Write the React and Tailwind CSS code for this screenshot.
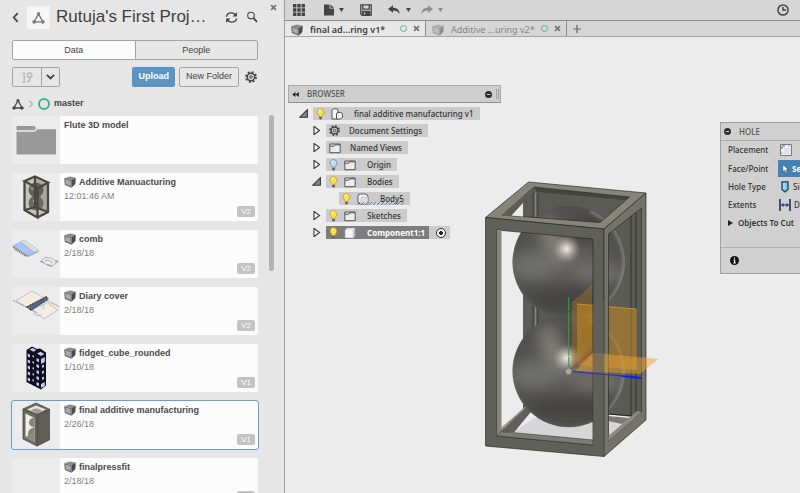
import React, { useState } from 'react';
import clsx from 'clsx';

const files = [
  { name: 'Flute 3D model', type: 'folder' },
  { name: 'Additive Manuacturing', date: '12:01:46 AM', version: 'V2', thumb: 'frame' },
  { name: 'comb', date: '2/18/18', version: 'V2', thumb: 'comb' },
  { name: 'Diary cover', date: '2/18/18', version: 'V2', thumb: 'diary' },
  { name: 'fidget_cube_rounded', date: '1/10/18', version: 'V1', thumb: 'fidget' },
  { name: 'final additive manufacturing', date: '2/26/18', version: 'V1', thumb: 'solid' },
  { name: 'finalpressfit', date: '2/18/18', version: 'V1', thumb: 'none' }
];

const documents = [
  { id: 1, name: 'final ad...ring v1*' },
  { id: 2, name: 'Additive ...uring v2*' }
];

/* ---------- Icons ---------- */

const NodesIcon = ({ className }) => (
  <svg viewBox="0 0 24 24" className={className} fill="none" stroke="currentColor" strokeWidth="2.6">
    <path d="M11 7 5 18M13 7l6 11M6 20h12" />
    <circle cx="12" cy="5" r="3" fill="currentColor" stroke="none" />
    <circle cx="4" cy="20" r="3.4" fill="currentColor" stroke="none" />
    <circle cx="20" cy="20" r="3.4" fill="currentColor" stroke="none" />
  </svg>
);

const GearIcon = ({ className }) => (
  <svg viewBox="0 0 24 24" className={className} fill="none" stroke="currentColor">
    <circle cx="12" cy="12" r="10" strokeWidth="3.6" strokeDasharray="3.93 3.93" />
    <circle cx="12" cy="12" r="7.4" strokeWidth="3" />
    <circle cx="12" cy="12" r="2.6" strokeWidth="2" />
  </svg>
);

const CubeIcon = ({ className }) => (
  <svg viewBox="0 0 12 12" className={className}>
    <path d="M.2 2.2 6 .5l5.800 1.200L7.500 4z" fill="#8a8a8a" />
    <path d="M.2 2.200 7.500 4v7.800L.8 8.900z" fill="#6b6b6b" />
    <path d="M1.500 3.600 6.600 4.900v5.200L1.700 8z" fill="#acacac" />
    <path d="M7.500 4l4.300-2.300-.4 6.300-3.900 3.800z" fill="#4c4c4c" />
  </svg>
);

const CloseIcon = ({ className }) => (
  <svg viewBox="0 0 10 10" className={className} stroke="currentColor" strokeWidth="2.6">
    <path d="M1.5 1.5l7 7M8.5 1.5l-7 7" />
  </svg>
);

const BulbIcon = ({ off }) => (
  <svg viewBox="0 0 10 14" className="h-3 w-[9px] shrink-0">
    <path
      d="M5 .8a4 4 0 0 0-2.3 7.3c.6.5.6 1 .6 1.7h3.4c0-.7 0-1.2.6-1.7A4 4 0 0 0 5 .8z"
      fill={off ? '#c3dcf5' : '#ffe24a'}
      stroke={off ? '#6d86ad' : '#c99c1c'}
      strokeWidth="1"
    />
    <path d="M3 3.6A2 2 0 0 1 5 2.3" stroke="#fff" strokeWidth="1.2" fill="none" />
    <path d="M3.3 10.5h3.4v2L5 13.6l-1.7-1.1z" fill="#666" />
  </svg>
);

const FolderIcon = () => (
  <svg viewBox="0 0 12 12" className="size-3 shrink-0" fill="#ececec" stroke="#555" strokeWidth="1">
    <path d="M.8 2h10.4v8.7H.8z" />
    <path d="M.8 4.2h4l1-1.4h5.2" fill="none" />
  </svg>
);

const BodyIcon = () => (
  <svg viewBox="0 0 12 12" className="size-3 shrink-0">
    <path d="M1 3.4Q1 1 3.4 1h4Q11 1 11 4v7H3.4Q1 11 1 8.6z" fill="#fafafa" stroke="#555" />
    <path d="M4 11V5.5Q4 4 5.5 4H11v7z" fill="#dedede" stroke="#aaa" strokeWidth=".6" />
  </svg>
);

const ComponentIcon = () => (
  <svg viewBox="0 0 12 12" className="size-3 shrink-0">
    <path d="M1 3l2-2h8v8l-2 2H1z" fill="#f6f6f6" stroke="#999" strokeWidth=".6" />
    <path d="M9 3.2 11 1v8l-2 2z" fill="#bdbdbd" />
    <path d="M1.6 3.2H9v7.3" fill="none" stroke="#d5d5d5" strokeWidth=".6" />
  </svg>
);

const AssemblyIcon = () => (
  <svg viewBox="0 0 12 12" className="size-3 shrink-0" fill="#f4f4f4" stroke="#555" strokeWidth="1">
    <path d="M1 2 2.5.8H6L7 2v9H1z" />
    <path d="M5.5 6Q5.5 4.5 7 4.5h2.5q2 0 2 2V9l-2 2h-4z" />
  </svg>
);

const Expander = ({ open }) =>
  open ? (
    <svg viewBox="0 0 10 10" className="size-[9px] shrink-0">
      <path d="M9.3.8v8.4H.8z" fill="#8a8a8a" stroke="#333" strokeWidth="1.2" />
    </svg>
  ) : (
    <svg viewBox="0 0 10 10" className="size-[9px] shrink-0">
      <path d="M2.200.400 8.400 5 2.200 9.600z" fill="#f4f4f4" stroke="#333" strokeWidth="1.200" />
    </svg>
  );

/* ---------- Thumbnails ---------- */

const fidgetRows = [0, 1, 2, 3, 4];

const Thumb = ({ kind }) => {
  if (kind === 'folder') {
    return (
      <svg viewBox="0 0 48 48" className="size-12">
        <path d="M4.500 10h17.300q1.800 0 2 2.200-.3 1.600-2 2H4.500z" fill="#999" />
        <path d="M4.500 15.800H22q2 0 3-2.500h19V38.500H4.500z" fill="#999" />
      </svg>
    );
  }
  if (kind === 'frame') {
    return (
      <svg viewBox="0 0 48 48" className="size-12">
        <path d="M12 8 23 3l13 6v31l-11 5-13-8z" fill="#c4c3bf" />
        <path d="M24 6l11 5v28l-9-4z" fill="#a9a7a2" />
        <circle cx="24" cy="17" r="7.500" fill="#625f59" />
        <circle cx="24" cy="30" r="7.500" fill="#6c6963" />
        <circle cx="21" cy="15" r="2.500" fill="#8b8882" />
        <circle cx="23" cy="28" r="1.800" fill="#e7e3dc" />
        <path d="M12.500 8 23 3.500 36 9.500 25.500 15.500zM12.500 8v29l13 7.500V15.500M25.500 44.500 36 39V9.500M23 4v30l-10 3M23 34l13 5" fill="none" stroke="#4a4640" strokeWidth="2.300" />
      </svg>
    );
  }
  if (kind === 'comb') {
    return (
      <svg viewBox="0 0 48 48" className="size-12">
        <path d="M0 16.500 10 12l17 10-11 5z" fill="#a4b0ca" />
        <path d="M1 15 7 12l17 9.500-8 4z" fill="#a9c2fa" />
        <path d="M1 17l15 9.500M2 19l13 8" stroke="#6d6d6d" strokeWidth="1" strokeDasharray="2 1" />
        <path d="M8 12 12 10.500l15 10-4 2z" fill="#f6f3e9" stroke="#7a9bd8" strokeWidth=".6" />
        <path d="M10 11.800l15 9.700" stroke="#a9b453" strokeWidth=".7" />
        <g fill="#f2e7dc" stroke="#6f90cf" strokeWidth=".6">
          <path d="M31 29q3-3 6-1 3-1 5 2l4 1-3 3q-2 3-5 1l-5-1-4-3z" />
          <path d="M33 31q3-2 5 0l3 2" fill="none" />
        </g>
        <path d="M28 31.500l4 1M35 35l5 1.500M43 32l3 0" stroke="#777" strokeWidth=".7" fill="none" />
      </svg>
    );
  }
  if (kind === 'diary') {
    return (
      <svg viewBox="0 0 48 48" className="size-12">
        <path d="M4 13.500 20 4l14 8-18 9z" fill="#f5ebe0" stroke="#8fa2cf" strokeWidth=".6" />
        <path d="M20 23 35 15.500l11 7.500-14 9z" fill="#f5ebe0" stroke="#8fa2cf" strokeWidth=".6" />
        <path d="M14 20 34 9l3 3-18 12z" fill="#6a6b70" />
        <path d="M15 20l20-10M18 23l18-10.500" stroke="#3c3d42" strokeWidth="1.400" strokeDasharray="1.500 1.500" />
        <path d="M22 19.500l9-5" stroke="#2a62d4" strokeWidth="2" strokeDasharray="2 2.500" />
        <path d="M1 13.500l14 7M34 13l13 6.500M20 23l5 3" stroke="#666" strokeWidth=".7" strokeDasharray="2 .7" />
        <path d="M21 26l4 3 4-1M29 20l4-2M30 22l3-1" stroke="#85a5d9" strokeWidth=".6" fill="none" />
      </svg>
    );
  }
  if (kind === 'fidget') {
    return (
      <svg viewBox="0 0 48 48" className="size-12">
        <path d="M14.500 6 20 2.500l5 2.500q3-1 4 0l5 3.500v33L29 45.500 14.500 38z" fill="#0e0e1c" />
        <g fill="#c4c8f4">
          <path d="M17.500 5.500 20.500 4l4 2-3 1.800zM25 9.500l3.500-1.800 4 2.300-3.500 2z" />
          <path d="M29 15l3.800-2v5L29 20zM29 40l3.800-2v4L29 44z" />
          {fidgetRows.map((row) => (
            <g key={row} transform={`translate(0 ${row * 6})`}>
              <path d="M15.800 9.500l2.200 1v3l-2.200-1zM20.500 11l1.500.7v2l-1.500-.7zM24.500 14l2.500 1.200v3L24.500 17z" />
              {row > 0 && row < 4 && <path d="M30 15.500l2-1v2.500l-2 1z" />}
            </g>
          ))}
        </g>
      </svg>
    );
  }
  if (kind === 'solid') {
    return (
      <svg viewBox="0 0 48 48" className="size-12">
        <path d="M11 8 24 2l14 6.500v30L25 45l-14-7z" fill="#6d6b60" />
        <path d="M15 8.500 24 4.500l10 4-9 4z" fill="#e3e3e1" />
        <path d="M19 9.500q5-4 11 0l-5 3z" fill="#9b9990" />
        <path d="M13.500 12.500 22.500 17v24l-9-5z" fill="#eeeeec" />
        <path d="M22.500 16q-6 2-5.500 6 1 4 5.500 4zM22.500 26q-7 2-6.500 7 1 3 6.500 3.500z" fill="#85847e" />
        <path d="M13.500 36l6-4 3 2v7z" fill="#8b897f" />
        <path d="M25 14l13-5.500v30L25 45z" fill="#605f55" />
        <path d="M11 8l14 6v31M25 14l13-5.500M11 8v30l14 7 13-6.500M11 8l13-6 14 6.500" fill="none" stroke="#464539" strokeWidth=".8" />
      </svg>
    );
  }
  return null;
};

/* ---------- Data panel ---------- */

const FileCard = ({ file, selected, onSelect }) => (
  <li>
    <a
      href="#file"
      onClick={onSelect}
      className={clsx(
        'flex h-12 rounded-xs bg-[#fcfcfc]',
        selected && 'outline outline-[#6d9bd0]'
      )}
    >
      <span className="w-12 shrink-0 bg-[#ececec]">
        <Thumb kind={file.type || file.thumb} />
      </span>
      <span className="relative flex flex-1 flex-col gap-1 px-1 pt-1">
        <span className="flex items-center gap-[3px] text-[9px] leading-[10px] font-bold text-[#4a4a4a]">
          {file.type !== 'folder' && <CubeIcon className="size-3 shrink-0 -my-px" />}
          {file.name}
        </span>
        <span className="text-[9px] leading-[10px] text-[#808080]">{file.date}</span>
        {file.version && (
          <span className="absolute right-[3px] bottom-1 rounded-xs bg-[#c3c3c3] px-1 text-[8px] leading-[11px] text-white">
            {file.version}
          </span>
        )}
      </span>
    </a>
  </li>
);

const DataPanel = () => {
  const [tab, setTab] = useState('Data');
  const [selected, setSelected] = useState('final additive manufacturing');

  return (
    <aside className="relative flex w-[285px] shrink-0 flex-col overflow-hidden border-r border-[#9c9c9c] bg-[#e6e6e6] pr-[26px] pl-3 text-[#444]">
      <header className="flex h-[34px] shrink-0 items-center">
        <button aria-label="Back" className="w-[15px]">
          <svg viewBox="0 0 8 12" className="h-[11px] w-[7px]" fill="none" stroke="currentColor" strokeWidth="2">
            <path d="M6.500 1 2 6l4.500 5" />
          </svg>
        </button>
        <span className="flex size-[23px] items-center justify-center rounded-xs bg-[#f6f6f6]">
          <NodesIcon className="size-[13px] text-[#777]" />
        </span>
        <h1 className="ml-[6px] text-[17px] leading-5 whitespace-nowrap text-[#3f3f3f]">Rutuja's First Proj…</h1>
        <button aria-label="Refresh" className="ml-auto">
          <svg viewBox="0 0 24 24" className="size-[13px]" fill="none" stroke="currentColor" strokeWidth="2.600">
            <path d="M2.500 10.500C3.500 6 7.500 3.500 11.500 3.500c3.500 0 6 1.500 8 4M21.500 13.500c-1 4.500-5 7-9 7-3.500 0-6-1.500-8-4" />
            <path d="M22 2v8h-8zM2 22v-8h8z" fill="currentColor" stroke="none" />
          </svg>
        </button>
        <button aria-label="Search" className="ml-2">
          <svg viewBox="0 0 12 12" className="size-3" fill="none" stroke="currentColor">
            <circle cx="5" cy="4.600" r="3.300" strokeWidth="1.100" />
            <path d="M7.500 7.200l3.500 3.600" strokeWidth="1.800" />
          </svg>
        </button>
      </header>
      <button aria-label="Close panel" className="absolute top-1 right-[7px]">
        <CloseIcon className="size-[7px] text-[#777]" />
      </button>

      <div className="mt-[6px] flex h-5 shrink-0 overflow-hidden rounded-xs border border-[#a3a3a3] text-[9px]">
        {['Data', 'People'].map((name) => (
          <button
            key={name}
            onClick={() => setTab(name)}
            className={clsx('flex-1 border-[#a3a3a3] pt-px first:border-r', tab === name && 'bg-[#fcfcfc]')}
          >
            {name}
          </button>
        ))}
      </div>

      <div className="mt-[7px] flex h-5 shrink-0 items-stretch gap-1 text-[9px]">
        <div className="flex rounded-xs border border-[#a3a3a3]">
          <button aria-label="Branch" className="flex w-7 items-center justify-center">
            <svg viewBox="0 0 12 14" className="h-[13px] w-3" fill="none" stroke="#b5b5b5" strokeWidth="1.500">
              <path d="M3 4v6M1 2.500h3.500M1 11.500h3.500M9 7v1.500Q9 11 6 11.500" />
              <circle cx="9" cy="4.500" r="2.300" />
            </svg>
          </button>
          <button aria-label="Branch menu" className="flex w-[18px] items-center justify-center border-l border-[#a3a3a3]">
            <svg viewBox="0 0 10 7" className="w-[9px]" fill="none" stroke="currentColor" strokeWidth="2">
              <path d="M1 1l4 4 4-4" />
            </svg>
          </button>
        </div>
        <button className="ml-auto rounded-xs bg-[#5c93c5] px-[6px] font-bold text-white">Upload</button>
        <button className="rounded-xs border border-[#a3a3a3] px-[6px]">New Folder</button>
        <button aria-label="Settings" className="pr-px pl-[2px]">
          <GearIcon className="size-3" />
        </button>
      </div>

      <nav className="mt-[11px] flex h-3 shrink-0 items-center text-[9px] font-bold">
        <NodesIcon className="size-3" />
        <svg viewBox="0 0 8 12" className="ml-1 h-2 w-[6px]" fill="none" stroke="#b8b8b8" strokeWidth="2.400">
          <path d="M1.500 1 6 6l-4.500 5" />
        </svg>
        <span className="ml-1 size-3 rounded-full border-2 border-[#34b495]"></span>
        <a href="#master" className="ml-1">master</a>
      </nav>

      <ul className="mt-[6px] flex flex-col gap-[9px]">
        {files.map((file) => (
          <FileCard
            key={file.name}
            file={file}
            selected={selected === file.name}
            onSelect={() => setSelected(file.name)}
          />
        ))}
      </ul>
      <div className="absolute top-[115px] right-[10px] h-[156px] w-[5px] rounded-full bg-[#b3b3b3]"></div>
    </aside>
  );
};

/* ---------- Toolbar and document tabs ---------- */

const Caret = ({ className }) => (
  <svg viewBox="0 0 6 5" className={clsx('h-1 w-[5px]', className)}>
    <path d="M0 0h6L3 5z" fill="currentColor" />
  </svg>
);

const Toolbar = () => (
  <div className="flex h-[21px] shrink-0 items-center border-b border-[#8c8c8c] bg-[#d6d6d6] px-2 text-[#444]">
    <button aria-label="Data panel">
      <svg viewBox="0 0 12 12" className="size-3" fill="currentColor">
        <path d="M0 0h3.400v3.400H0zM4.300 0h3.400v3.400H4.300zM8.600 0H12v3.400H8.600zM0 4.300h3.400v3.400H0zM4.300 4.300h3.400v3.400H4.300zM8.600 4.300H12v3.400H8.600zM0 8.600h3.400V12H0zM4.300 8.600h3.400V12H4.300zM8.600 8.600H12V12H8.600z" />
      </svg>
    </button>
    <button aria-label="File" className="ml-[19px] flex items-center gap-[5px]">
      <svg viewBox="0 0 10 12" className="h-3 w-[10px]" fill="currentColor">
        <path d="M0 .5h5.500v4H10v7H0zM6.400.5 10 3.700H6.400z" />
      </svg>
      <Caret />
    </button>
    <button aria-label="Save" className="ml-4">
      <svg viewBox="0 0 12 12" className="size-3" fill="none" stroke="currentColor" strokeWidth="1.300">
        <path d="M.8.8h10.400v10.400H2L.8 10z" />
        <path d="M2.800.8v4.400h6.400V.8" />
        <path d="M2.600 7.300h7v4h-7z" fill="currentColor" />
        <path d="M4.500 8.500v2" stroke="#d6d6d6" />
      </svg>
    </button>
    <button aria-label="Undo" className="ml-4 flex items-center gap-[6px]">
      <svg viewBox="0 0 12 10" className="h-[10px] w-3" fill="currentColor">
        <path d="M0 4 5 .3v2.400c4 0 6.500 2 6.500 6.300C10 6.500 8.300 5.600 5 5.500v2.300z" />
      </svg>
      <Caret />
    </button>
    <button aria-label="Redo" className="ml-[10px] flex items-center gap-[5px] text-[#8d8d8d]">
      <svg viewBox="0 0 12 10" className="h-[10px] w-3" fill="currentColor">
        <path d="M12 4 7 .3v2.400C3 2.700.5 4.700.5 9 2 6.500 3.700 5.600 7 5.500v2.300z" />
      </svg>
      <Caret />
    </button>
    <button aria-label="Job status" className="mr-[3px] ml-auto">
      <svg viewBox="0 0 12 12" className="size-3" fill="none" stroke="currentColor" strokeWidth="1.500">
        <circle cx="6" cy="6" r="5.100" />
        <path d="M6 3v3h3" />
      </svg>
    </button>
  </div>
);

const DocumentTabs = () => {
  const [active, setActive] = useState(1);

  return (
    <div className="flex h-4 shrink-0 border-b border-[#a5a5a5] bg-[#d6d6d6] text-[9px]">
      {documents.map((doc) => (
        <div
          key={doc.id}
          className={clsx(
            'flex w-[141px] items-center border-r border-[#8c8c8c] pr-[5px] pl-[6px]',
            active === doc.id ? 'bg-[#e8e8e8] font-semibold text-[#3d3d3d]' : 'text-[#858585]'
          )}
        >
          <button onClick={() => setActive(doc.id)} className="flex items-center gap-[7px] pt-[2px] leading-[13px] whitespace-nowrap">
            <CubeIcon className={clsx('size-3', active !== doc.id && 'opacity-50')} />
            {doc.name}
          </button>
          <span className="ml-auto size-[7px] rounded-full border border-[#49b99d]"></span>
          <button aria-label={`Close ${doc.name}`} className="ml-[6px]">
            <CloseIcon className="size-[7px] text-[#777]" />
          </button>
        </div>
      ))}
      <button aria-label="New tab" className="px-[6px]">
        <svg viewBox="0 0 8 8" className="size-2" stroke="#666" strokeWidth="1.200">
          <path d="M4 0v8M0 4h8" />
        </svg>
      </button>
    </div>
  );
};

/* ---------- Browser tree ---------- */

const TreeRow = ({ indent, expander, children }) => (
  <li className={clsx('flex h-[13px] items-center gap-[5px]', indent)}>
    {expander}
    {children}
  </li>
);

const Label = ({ active, children }) => (
  <span
    className={clsx(
      'relative flex h-[13px] items-center gap-[6px] pl-[3px] whitespace-nowrap',
      active ? 'bg-[#7d7d7d] pr-1 font-bold text-white' : 'bg-[#cbcbcb] pr-[6px]'
    )}
  >
    {children}
  </span>
);

const BrowserPanel = () => (
  <section className="absolute top-[48px] left-[3px] w-[213px] text-[8px] font-medium text-[#333]">
    <header className="flex h-[18px] items-center border border-[#a8a8a8] border-b-[#8f8f8f] bg-[#cecece] pl-[3px] text-[#555]">
      <button aria-label="Collapse">
        <svg viewBox="0 0 8 6" className="h-[5px] w-[7px]" fill="#222">
          <path d="M4 0v6L0 3zM8 0v6L4 3z" />
        </svg>
      </button>
      <h2 className="ml-2">BROWSER</h2>
      <button aria-label="Minimize" className="ml-auto">
        <svg viewBox="0 0 8 8" className="size-[7px]">
          <circle cx="4" cy="4" r="4" fill="#2b2b2b" />
          <path d="M2 4h4" stroke="#ddd" />
        </svg>
      </button>
      <span className="mr-px ml-1 h-[10px] w-[3px] border-x border-[#a0a0a0]"></span>
    </header>
    <ul className="mt-1 flex flex-col gap-1">
      <TreeRow indent="pl-[11px]" expander={<Expander open />}>
        <Label>
          <BulbIcon />
          <AssemblyIcon />
          <span className="ml-[5px]">final additive manufacturing v1</span>
        </Label>
      </TreeRow>
      <TreeRow indent="pl-[24px]" expander={<Expander />}>
        <Label>
          <GearIcon className="size-[11px] text-[#444]" />
          <span className="ml-[3px]">Document Settings</span>
        </Label>
      </TreeRow>
      <TreeRow indent="pl-[24px]" expander={<Expander />}>
        <Label>
          <FolderIcon />
          <span className="ml-[3px]">Named Views</span>
        </Label>
      </TreeRow>
      <TreeRow indent="pl-[24px]" expander={<Expander />}>
        <Label>
          <BulbIcon off />
          <FolderIcon />
          <span className="ml-[5px]">Origin</span>
        </Label>
      </TreeRow>
      <TreeRow indent="pl-[24px]" expander={<Expander open />}>
        <Label>
          <BulbIcon />
          <FolderIcon />
          <span className="ml-[5px]">Bodies</span>
        </Label>
      </TreeRow>
      <TreeRow indent="pl-[51px]">
        <Label>
          <BulbIcon />
          <BodyIcon />
          <span className="ml-[5px]">Body5</span>
          <svg className="absolute bottom-0 left-[18px] h-[3px] w-12" stroke="#5b7fae" strokeWidth="1">
            <path d="M0 3l3-3M4 3l3-3M8 3l3-3M12 3l3-3M16 3l3-3M20 3l3-3M24 3l3-3M28 3l3-3M32 3l3-3M36 3l3-3M40 3l3-3M44 3l3-3" />
          </svg>
        </Label>
      </TreeRow>
      <TreeRow indent="pl-[24px]" expander={<Expander />}>
        <Label>
          <BulbIcon />
          <FolderIcon />
          <span className="ml-[5px]">Sketches</span>
        </Label>
      </TreeRow>
      <TreeRow indent="pl-[24px]" expander={<Expander />}>
        <span className="flex bg-[#cbcbcb] pr-1">
          <Label active>
            <BulbIcon />
            <ComponentIcon />
            <span className="ml-[5px]">Component1:1</span>
          </Label>
          <label className="flex h-[13px] items-center pl-[7px]">
            <input
              type="radio"
              name="component"
              aria-label="Activate Component1:1"
              defaultChecked
              className="size-[10px] appearance-none rounded-full border border-[#333] bg-[#f2f2f2] bg-[radial-gradient(circle,#222_2px,transparent_2px)]"
            />
          </label>
        </span>
      </TreeRow>
    </ul>
  </section>
);

/* ---------- Hole dialog ---------- */

const HolePanel = () => (
  <section className="absolute top-[85px] right-0 w-20 overflow-hidden border border-r-0 border-[#a0a0a0] bg-[#d0d0d0] text-[8px] font-medium whitespace-nowrap text-[#333]">
    <header className="flex h-[18px] items-center gap-2 border-b border-[#a8a8a8] pl-[3px] text-[#555]">
      <svg viewBox="0 0 8 8" className="size-[7px]">
        <circle cx="4" cy="4" r="4" fill="#2b2b2b" />
        <path d="M2 4h4" stroke="#ddd" />
      </svg>
      <h2>HOLE</h2>
    </header>
    <div className="flex flex-col gap-1 pt-[2px] pl-[7px]">
      <div className="flex h-[14px] items-center">
        <span className="w-[50px]">Placement</span>
        <button aria-label="Placement" className="pl-[2px]">
          <svg viewBox="0 0 12 12" className="size-3">
            <path d="M.5.5h11v11H.5z" fill="#eef0f4" stroke="#777" />
            <path d="M2 5V2h3" fill="none" stroke="#4776b8" />
            <path d="M8 2h2M2 8v2" stroke="#aaa" />
            <path d="M4 4h6v6H4z" fill="#dde2ee" />
          </svg>
        </button>
      </div>
      <div className="flex h-[15px] items-center">
        <span className="w-[50px] shrink-0">Face/Point</span>
        <button className="flex h-[17px] shrink-0 items-center gap-[3px] bg-[#4580b5] pr-5 pl-1 font-bold text-white">
          <svg viewBox="0 0 8 11" className="h-[10px] w-[7px]">
            <path d="M1 .5v8l2-1.600L4.300 10l1.500-.7L4.500 6.400l2.700-.2z" fill="#fff" stroke="#234" strokeWidth=".5" />
          </svg>
          Select
        </button>
      </div>
      <div className="flex h-[14px] items-center">
        <span className="w-[50px] shrink-0">Hole Type</span>
        <button className="flex shrink-0 items-center gap-1 pl-[3px]">
          <svg viewBox="0 0 8 12" className="h-3 w-2">
            <path d="M1 .8h6v7.700L4 11 1 8.500z" fill="#7fc4ec" stroke="#1d3f66" strokeWidth="1.300" />
            <path d="M3 2v6" stroke="#d8f0ff" />
          </svg>
          Simple
        </button>
      </div>
      <div className="flex h-[14px] items-center">
        <span className="w-[50px] shrink-0">Extents</span>
        <button className="flex shrink-0 items-center gap-[3px] pl-px">
          <svg viewBox="0 0 12 12" className="size-3" stroke="#16305a" fill="#16305a">
            <path d="M1 0v12M11 0v12" strokeWidth="1.600" />
            <path d="M3 6h6" strokeWidth="1" />
            <path d="M2 6l2.500-2v4zM10 6 7.500 4v4z" stroke="none" />
          </svg>
          Distance
        </button>
      </div>
      <button className="flex h-[14px] items-center gap-[5px] text-left font-semibold">
        <svg viewBox="0 0 5 6" className="h-[6px] w-[5px]" fill="#222">
          <path d="M0 0l5 3-5 3z" />
        </svg>
        Objects To Cut
      </button>
    </div>
    <footer className="mt-[17px] flex h-[26px] items-center border-t border-[#b0b0b0] pl-[9px]">
      <button aria-label="Info">
        <svg viewBox="0 0 10 10" className="size-[9px]">
          <circle cx="5" cy="5" r="5" fill="#111" />
          <path d="M5 1.600v1.500M3.800 4.500h1.400v3.300M3.700 7.800h2.800" stroke="#fff" strokeWidth="1.200" fill="none" />
        </svg>
      </button>
    </footer>
  </section>
);

/* ---------- 3D model ---------- */

const Sphere = ({ cy, id }) => (
  <g>
    <clipPath id={id}>
      <circle cx="568.800" cy={cy} r="56.300" />
    </clipPath>
    <circle cx="568.800" cy={cy} r="56.300" fill="url(#ball)" />
    <g clipPath={`url(#${id})`}>
      <ellipse cx="530" cy={cy + 4} rx="24" ry="14" fill="#8c908c" opacity=".45" filter="url(#soft)" />
      <ellipse cx="602" cy={cy + 12} rx="26" ry="12" fill="#8e8e8a" opacity=".4" filter="url(#soft)" />
      <ellipse cx="553" cy={cy - 22} rx="11" ry="26" fill="#a59d95" opacity=".5" filter="url(#soft)" transform={`rotate(-22 553 ${cy - 22})`} />
      <ellipse cx="585" cy={cy - 32} rx="20" ry="13" fill="#2e2b29" opacity=".5" filter="url(#soft)" />
      <ellipse cx="572" cy={cy + 36} rx="42" ry="12" fill="#2f2f2d" opacity=".45" filter="url(#soft)" />
      <path d={`M590 ${cy - 51}A55.300 55.300 0 0 1 608 ${cy + 39}`} fill="none" stroke="#a0a09a" strokeWidth="3" opacity=".6" filter="url(#edge)" />
    </g>
    <circle cx="566.500" cy={cy - 13} r="14" fill="url(#shine)" />
  </g>
);

const Model = () => (
  <svg viewBox="484 180 176 280" className="absolute top-[143px] left-[199px] h-[280px] w-[176px]">
    <defs>
      <radialGradient id="ball" cx=".5" cy=".48" r=".53">
        <stop offset="0" stopColor="#6a6764" />
        <stop offset=".5" stopColor="#5b5956" />
        <stop offset=".9" stopColor="#51514e" />
        <stop offset="1" stopColor="#5e5e5a" />
      </radialGradient>
      <radialGradient id="shine">
        <stop offset="0" stopColor="#f0ebe6" />
        <stop offset=".3" stopColor="#d6d0ca" stopOpacity=".8" />
        <stop offset="1" stopColor="#a5a09a" stopOpacity="0" />
      </radialGradient>
      <filter id="soft" x="-80%" y="-80%" width="260%" height="260%">
        <feGaussianBlur stdDeviation="7" />
      </filter>
      <filter id="edge" x="-50%" y="-20%" width="200%" height="140%">
        <feGaussianBlur stdDeviation="1.800" />
      </filter>
    </defs>

    {/* floor and back walls */}
    <path d="M514 432 534 418 634 418 608 441 592 445z" fill="#d6d6d8" />
    <path d="M523 190 534 187 642 197V418L606 414 537 405 523 410z" fill="#5b5b56" />
    <path d="M534 187 629 197 625 200 537 192z" fill="#45453f" />
    <path d="M533 192V406M538 193V405" stroke="#2e2e2b" strokeWidth=".7" />
    <path d="M535.500 193V405" stroke="#85857b" strokeWidth="1.300" />
    <path d="M501 431 528 406 537 404 514 432z" fill="#62625b" stroke="#33332f" strokeWidth=".5" />
    <path d="M500 430 527 406" stroke="#8a8a80" strokeWidth="1.500" />
    <path d="M631 200V416M636 206V414" stroke="#33332f" strokeWidth="1" />
    <path d="M608 414 634 416" stroke="#262624" strokeWidth="1" />
    <path d="M608 416 630 418 622 424 608 421z" fill="#7a7a71" />

    <Sphere cy={262} id="upper" />
    <Sphere cy={371} id="lower" />

    {/* work planes */}
    <path d="M572 302 592 285V345L572 365z" fill="#c98a1f" opacity=".3" />
    <path d="M577 304 636 309V370L577 365z" fill="#c98a1f" opacity=".52" />
    <path d="M577 304 636 309V370" fill="none" stroke="#d59b2e" strokeWidth=".8" />

    {/* top frame */}
    <path fillRule="evenodd" d="M485.500 217.500 528.500 182 646 193 604 229zM502 215 600 222.500 629.500 197 534 187z" fill="#85857a" stroke="#2c2c28" strokeWidth=".7" />
    <path d="M502 215 534 187V191L511 216z" fill="#5d5d57" />
    <path d="M512 215.500 523 206V216.500z" fill="#ececec" />

    {/* front frame */}
    <path fillRule="evenodd" d="M485.500 217.500 604 229V456.500L485.500 446zM497 230V436L593 445V239z" fill="#60605a" stroke="#2c2c28" strokeWidth=".7" />
    <path d="M497 230H501.500V432L497 436z" fill="#85857a" />
    <path d="M497 436 501 431.500 593 440V445z" fill="#7c7c71" stroke="#33332f" strokeWidth=".6" />

    {/* right frame */}
    <path fillRule="evenodd" d="M604 229 646 193V420L604 456.500zM608.500 234V441L641.500 412V208z" fill="#73736a" stroke="#2c2c28" strokeWidth=".7" />
    <path d="M608.500 436 637 411 641.500 412 608.500 441z" fill="#8a8a80" />

    {/* horizontal plane and axes */}
    <path d="M593 353 658.500 359 640 374 575 371z" fill="#eaa52f" opacity=".5" />
    <path d="M593 300H604V456L593 455z" fill="#60605a" opacity=".6" />
    <path d="M568.700 297V367" stroke="#20b030" strokeWidth="1" strokeDasharray="14 1" />
    <path d="M571 369 594 350" stroke="#b03a22" strokeWidth="1" />
    <path d="M573 371.500 622 376" stroke="#2a2ac8" strokeWidth="1" />
    <path d="M622 376 641 378" stroke="#1616ff" strokeWidth="2" />
    <circle cx="568.500" cy="371.300" r="3.400" fill="#a8a8a6" stroke="#6d6d6b" strokeWidth="1" />
  </svg>
);

const App = () => (
  <div className="flex h-screen w-full overflow-hidden bg-[#ececec] font-['Liberation_Sans',Arial,sans-serif]">
    <DataPanel />
    <main className="flex min-w-0 flex-1 flex-col font-['Noto_Sans','DejaVu_Sans',sans-serif]">
      <Toolbar />
      <DocumentTabs />
      <div className="relative flex-1 overflow-hidden">
        <Model />
        <BrowserPanel />
        <HolePanel />
      </div>
    </main>
  </div>
);

export default App;
